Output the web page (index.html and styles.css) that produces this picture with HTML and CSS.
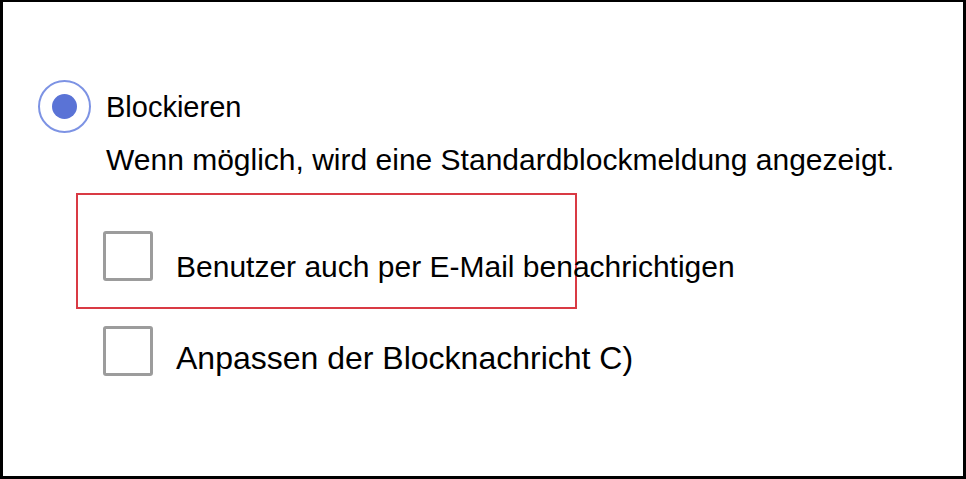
FILE: index.html
```html
<!DOCTYPE html>
<html lang="de">
<head>
<meta charset="utf-8">
<title>Blockieren</title>
<link rel="stylesheet" href="styles.css">
</head>
<body>
<div class="frame">
  <div class="radio-row">
    <span class="radio"><span class="radio-dot"></span></span>
    <span class="radio-label">Blockieren</span>
  </div>
  <p class="desc">Wenn möglich, wird eine Standardblockmeldung angezeigt.</p>
  <div class="highlight">
    <div class="check-row first">
      <span class="checkbox"></span>
      <span class="check-label">Benutzer auch per E-Mail benachrichtigen</span>
    </div>
  </div>
  <div class="check-row second">
    <span class="checkbox"></span>
    <span class="check-label">Anpassen der Blocknachricht C)</span>
  </div>
</div>
</body>
</html>
```

FILE: styles.css
```css
html, body {
  margin: 0;
  padding: 0;
  background: #fff;
}

.frame {
  box-sizing: border-box;
  width: 966px;
  height: 479px;
  border: 3px solid #000;
  border-top-width: 2px;
  font-family: "Liberation Sans", Arial, sans-serif;
  font-size: 29px;
  line-height: 34px;
  color: #000;
  overflow: hidden;
}

/* selected radio option */
.radio-row {
  display: flex;
  align-items: center;
  gap: 15px;
  height: 53px;
  margin: 78px 0 0 35px;
}

.radio {
  box-sizing: border-box;
  width: 53px;
  height: 53px;
  border: 2.5px solid #7d93e4;
  border-radius: 50%;
  display: flex;
  align-items: center;
  justify-content: center;
  flex: none;
}

.radio-dot {
  width: 25px;
  height: 25px;
  border-radius: 50%;
  background: #5a73d6;
}

.desc {
  margin: 10px 0 0 103px;
  font-size: 30px;
}

/* red annotation frame around the first option */
.highlight {
  box-sizing: border-box;
  width: 501px;
  height: 116px;
  margin: 16px 0 0 73px;
  border: 2px solid #d93a44;
  padding: 36px 0 0 25px;
}

.check-row {
  display: flex;
  align-items: flex-start;
  gap: 23px;
  white-space: nowrap;
}

.check-row.second {
  margin: 17px 0 0 100px;
}

.checkbox {
  box-sizing: border-box;
  width: 50px;
  height: 50px;
  border: 3px solid #9c9c9c;
  border-radius: 3px;
  flex: none;
}

.first .check-label {
  margin-top: 19px;
  font-size: 30px;
}

.second .check-label {
  margin-top: 15px;
  font-size: 32px;
}
```
